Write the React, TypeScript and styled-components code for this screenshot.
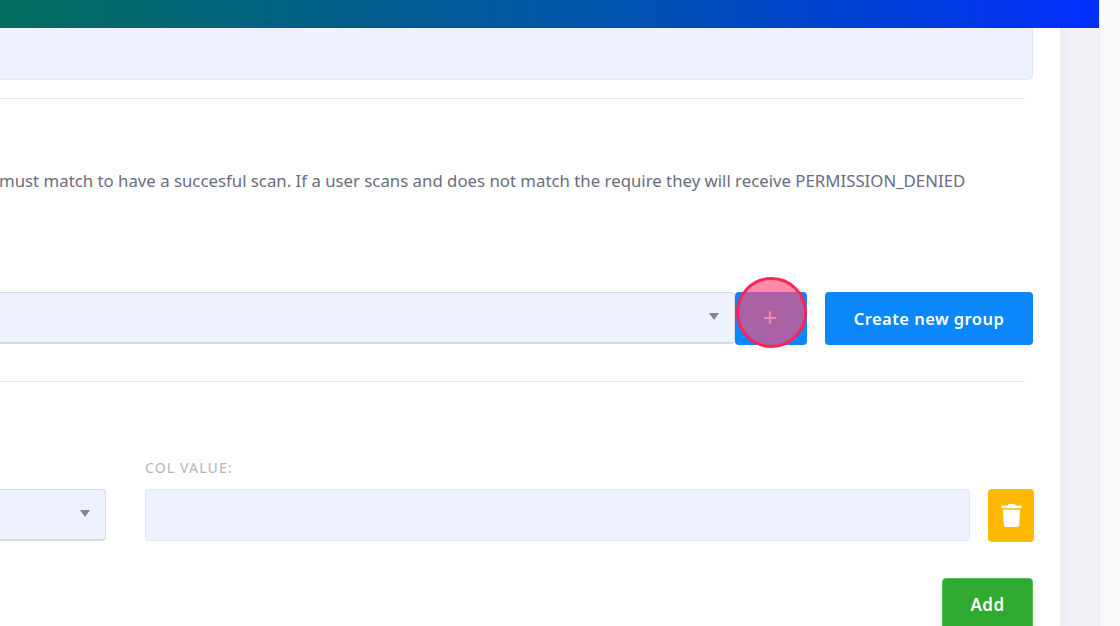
import { createGlobalStyle, styled } from 'styled-components';
import { FaTrash } from 'react-icons/fa';

const GlobalStyle = createGlobalStyle`
  html, body {
    margin: 0;
    padding: 0;
    overflow: hidden;
    background: #f9f9fb;
    font-family: "Noto Sans", "Open Sans", sans-serif;
  }
`;

export default function App() {
  return (
    <>
      <GlobalStyle />
      <Page>
        <Main>
          <Header />
          <Body>
            <Card>
              <TopInput />
              <Divider />
              <Description>
                must match to have a succesful scan. If a user scans and does not match the require they
                will receive PERMISSION_DENIED
              </Description>
              <GroupRow>
                <Select>
                  <Caret />
                </Select>
                <PlusButton>
                  <PlusSign>+</PlusSign>
                  <ClickMark />
                </PlusButton>
                <CreateButton>Create new group</CreateButton>
              </GroupRow>
              <Divider $gap={36} />
              <ColumnRow>
                <SmallSelect>
                  <Caret />
                </SmallSelect>
                <ValueField>
                  <FieldLabel>COL VALUE:</FieldLabel>
                  <ValueInput />
                </ValueField>
                <TrashButton>
                  <FaTrash size={23} />
                </TrashButton>
              </ColumnRow>
              <AddRow>
                <AddButton>Add</AddButton>
              </AddRow>
            </Card>
            <Gutter />
          </Body>
        </Main>
        <Scrollbar />
      </Page>
    </>
  );
}

const Page = styled.div`
  display: flex;
  width: 1120px;
  height: 626px;
  overflow: hidden;
`;

const Main = styled.div`
  display: flex;
  flex-direction: column;
  width: 1100px;
  flex: none;
  border-right: 1px solid #eaebf1;
  box-sizing: border-box;
`;

const Header = styled.div`
  height: 28px;
  flex: none;
  background: linear-gradient(90deg, #046c5c 0%, #006082 27%, #0052b0 58%, #0036e8 90%, #002eff 100%);
`;

const Body = styled.div`
  display: flex;
  flex: 1;
  min-height: 0;
`;

const Card = styled.div`
  width: 1060px;
  flex: none;
  background: #fff;
  overflow: hidden;
`;

const Gutter = styled.div`
  flex: 1;
  background: linear-gradient(90deg, #eeeff5 0, #f2f3f9 14px);
`;

const Scrollbar = styled.div`
  flex: 1;
  background: #f9f9fb;
`;

const TopInput = styled.div`
  width: 1033px;
  height: 52px;
  box-sizing: border-box;
  background: #eef2fe;
  border: 1px solid #e4e8f6;
  border-top: none;
  border-left: none;
  border-radius: 0 0 5px 0;
`;

const Divider = styled.div<{ $gap?: number }>`
  width: 1025px;
  height: 1px;
  margin-top: ${({ $gap = 18 }) => $gap}px;
  background: #e3e4e8;
`;

const Description = styled.p`
  margin: 71px 0 0 -1px;
  white-space: nowrap;
  font-size: 16.8px;
  line-height: 22px;
  color: #6a6d80;
`;

const GroupRow = styled.div`
  display: flex;
  align-items: stretch;
  width: 1033px;
  height: 53px;
  margin-top: 100px;
`;

const Select = styled.div`
  display: flex;
  align-items: center;
  justify-content: flex-end;
  width: 735px;
  height: 52px;
  flex: none;
  box-sizing: border-box;
  padding: 0 15px 3px 0;
  background: #eef2fe;
  border: 1px solid #d9dae3;
  border-bottom-width: 2px;
  border-left: none;
  border-radius: 0 4px 4px 0;
`;

const SmallSelect = styled(Select)`
  width: 106px;
  margin-bottom: 1px;
`;

const Caret = styled.span`
  width: 0;
  height: 0;
  border-left: 5.5px solid transparent;
  border-right: 5.5px solid transparent;
  border-top: 7px solid #85858c;
`;

const PlusButton = styled.div`
  position: relative;
  display: flex;
  align-items: center;
  justify-content: center;
  width: 72px;
  flex: none;
  background: #0a87fb;
  border-radius: 4px;
  color: #fff;
`;

const PlusSign = styled.span`
  font-size: 25px;
  line-height: 25px;
  margin: -2px 2px 0 0;
`;

const ClickMark = styled.span`
  position: absolute;
  left: 1px;
  top: -15px;
  width: 71px;
  height: 71px;
  box-sizing: border-box;
  border-radius: 50%;
  border: 3.5px solid #fb2459;
  background: rgba(255, 78, 118, 0.65);
`;

const CreateButton = styled.div`
  display: flex;
  align-items: center;
  justify-content: center;
  width: 208px;
  margin-left: 18px;
  flex: none;
  background: #0a87fb;
  border-radius: 4px;
  color: #fff;
  font-size: 16.5px;
  font-weight: 600;
  letter-spacing: 0.45px;
`;

const ColumnRow = styled.div`
  display: flex;
  align-items: flex-end;
  width: 1034px;
  margin-top: 77px;
`;

const ValueField = styled.div`
  display: flex;
  flex-direction: column;
  width: 825px;
  margin-left: 39px;
  flex: none;
`;

const FieldLabel = styled.label`
  font-size: 14px;
  line-height: 18px;
  letter-spacing: 1.15px;
  color: #b0b5c4;
  margin-bottom: 12px;
`;

const ValueInput = styled.div`
  height: 52px;
  margin-bottom: 1px;
  box-sizing: border-box;
  background: #eef2fe;
  border: 1px solid #e1e6f7;
  border-radius: 4px;
`;

const TrashButton = styled.div`
  display: flex;
  align-items: center;
  justify-content: center;
  width: 46px;
  height: 53px;
  margin-left: 18px;
  flex: none;
  background: #ffb803;
  border-radius: 4px;
  color: #fff;
`;

const AddRow = styled.div`
  display: flex;
  justify-content: flex-end;
  width: 1033px;
  margin-top: 36px;
`;

const AddButton = styled.div`
  display: flex;
  align-items: center;
  justify-content: center;
  width: 91px;
  height: 53px;
  box-sizing: border-box;
  background: #2fa92f;
  border: 1px solid #4fc24f;
  border-radius: 4px;
  color: #fff;
  font-size: 17px;
  font-weight: 600;
  letter-spacing: 0.5px;
`;
